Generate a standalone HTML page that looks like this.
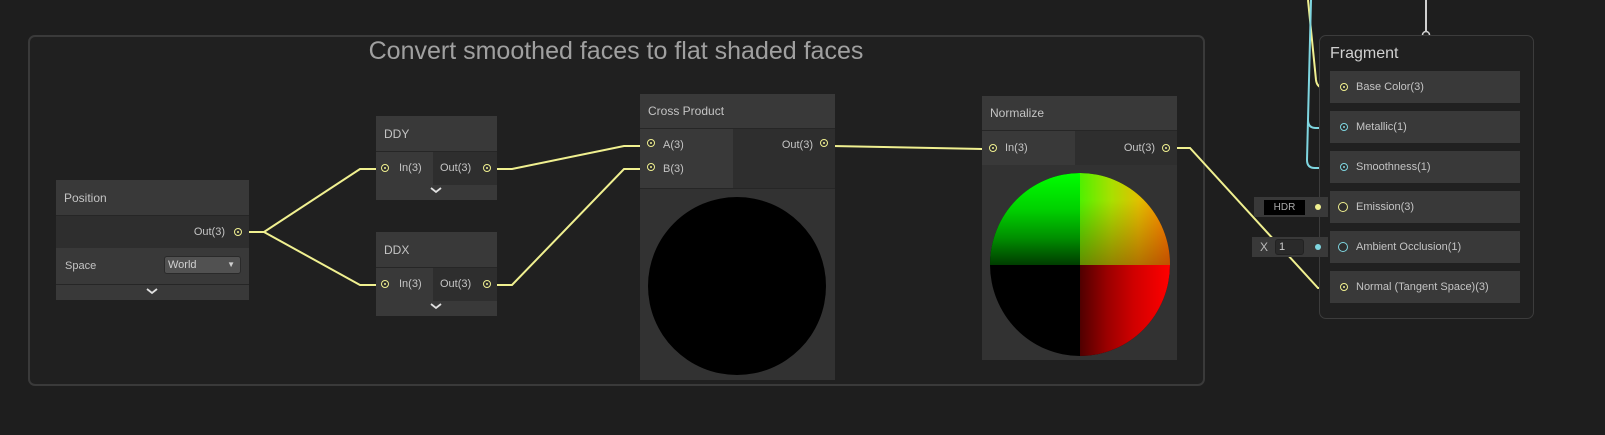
<!DOCTYPE html>
<html><head><meta charset="utf-8"><style>
*{margin:0;padding:0;box-sizing:border-box}
body{width:1605px;height:435px;background:#1e1e1e;position:relative;overflow:hidden;font-family:"Liberation Sans",sans-serif;color:#c4c4c4;font-size:11px}
.a{position:absolute}
.grp{left:28px;top:35px;width:1177px;height:351px;border:2px solid #3a3a3a;border-radius:7px;background:#202020}
.gt{left:0;width:1232px;top:37px;text-align:center;font-size:25px;color:#a0a0a0}
.hd{background:#393939;color:#c4c4c4;font-size:12px;padding-left:8px;border-bottom:1px solid #262626}
.in{background:#393939}
.out{background:#2e2e2e}
.sl{position:absolute;width:8px;height:8px;border-radius:50%;border:1.5px solid #f0f090;background:#2e2e2e}
.sl::after{content:"";position:absolute;left:1.5px;top:1.5px;width:2px;height:2px;border-radius:50%;background:#f0f090}
.sl.c{border-color:#7fd6e0}.sl.c::after{background:#7fd6e0}
.chev{background:#393939;text-align:center}
.fr{left:1319px;top:35px;width:215px;height:284px;border:1px solid #3c3c3c;border-radius:7px;background:#202020}
.slot{left:1330px;width:190px;height:32px;background:#393939;padding-left:26px;line-height:32px;font-size:11px}
</style></head><body>
<div class="a grp"></div>
<div class="a gt">Convert smoothed faces to flat shaded faces</div>

<svg class="a" style="left:0;top:0" width="1605" height="435">
<g fill="none" stroke="#f0f090" stroke-width="2">
<path d="M246 232 H264 L360 169 H378"/>
<path d="M264 232 L360 285 H378"/>
<path d="M496 169 H512 L624 146 H642"/>
<path d="M496 285 H512 L624 169 H642"/>
<path d="M832 146 L983 149"/>
<path d="M1175 148 H1190 L1318 288 H1335"/>
<path d="M1308 0 L1316 80 Q1317 88 1325 88 H1335"/>
<path d="M1328 208 H1335"/>
</g>
<g fill="none" stroke="#7fd6e0" stroke-width="2">
<path d="M1311 0 L1307 160 Q1307 168 1315 168 H1335"/>
<path d="M1308 120 Q1308 128 1316 128 H1335"/>
<path d="M1328 248 H1335"/>
</g>
<path d="M1426 0 V33" stroke="#cfcfcf" stroke-width="2"/>
<circle cx="1426" cy="35" r="3.5" fill="#202020" stroke="#cfcfcf" stroke-width="1.5"/>
</svg>

<!-- Position -->
<div class="a" style="left:56px;top:180px;width:193px;height:120px;background:#2e2e2e">
 <div class="hd" style="height:36px;line-height:36px">Position</div>
 <div class="out" style="height:32px;line-height:32px;text-align:right;padding-right:24px;position:relative">Out(3)<span class="sl" style="right:7px;top:12px"></span></div>
 <div class="in" style="height:36px;line-height:36px;padding-left:9px;position:relative">Space<div class="a" style="left:108px;top:8px;width:77px;height:18px;background:#515151;border:1px solid #2a2a2a;border-radius:3px;line-height:16px;padding-left:3px;color:#d0d0d0">World<span class="a" style="right:5px;top:0;font-size:8px">▼</span></div></div>
 <div class="chev" style="height:16px;border-top:1px solid #262626"></div>
</div>

<!-- DDY -->
<div class="a" style="left:376px;top:116px;width:121px;height:84px;background:#2e2e2e">
 <div class="hd" style="height:36px;line-height:36px">DDY</div>
 <div style="height:33px;display:flex;line-height:33px"><div class="in" style="width:57px;padding-left:23px;position:relative"><span class="sl" style="left:5px;top:12px"></span>In(3)</div><div class="out" style="width:64px;padding-left:7px;position:relative">Out(3)<span class="sl" style="right:6px;top:12px"></span></div></div>
 <div class="chev" style="height:15px"></div>
</div>
<!-- DDX -->
<div class="a" style="left:376px;top:232px;width:121px;height:84px;background:#2e2e2e">
 <div class="hd" style="height:36px;line-height:36px">DDX</div>
 <div style="height:33px;display:flex;line-height:33px"><div class="in" style="width:57px;padding-left:23px;position:relative"><span class="sl" style="left:5px;top:12px"></span>In(3)</div><div class="out" style="width:64px;padding-left:7px;position:relative">Out(3)<span class="sl" style="right:6px;top:12px"></span></div></div>
 <div class="chev" style="height:15px"></div>
</div>

<!-- Cross Product -->
<div class="a" style="left:640px;top:94px;width:195px;height:286px;background:#2e2e2e">
 <div class="hd" style="height:35px;line-height:35px">Cross Product</div>
 <div style="height:59px;display:flex"><div class="in" style="width:93px;position:relative"><span class="sl" style="left:7px;top:10px"></span><span class="a" style="left:23px;top:10px">A(3)</span><span class="sl" style="left:7px;top:34px"></span><span class="a" style="left:23px;top:34px">B(3)</span></div><div class="out" style="width:102px;position:relative"><span class="a" style="right:22px;top:10px">Out(3)</span><span class="sl" style="right:7px;top:10px"></span></div></div>
 <div style="height:192px;background:#323232;border-top:1px solid #262626;position:relative"><div class="a" style="left:8px;top:8px;width:178px;height:178px;border-radius:50%;background:#000"></div></div>
</div>

<!-- Normalize -->
<div class="a" style="left:982px;top:96px;width:195px;height:264px;background:#2e2e2e">
 <div class="hd" style="height:35px;line-height:35px">Normalize</div>
 <div style="height:34px;display:flex;line-height:34px"><div class="in" style="width:93px;padding-left:23px;position:relative"><span class="sl" style="left:7px;top:13px"></span>In(3)</div><div class="out" style="width:102px;text-align:right;padding-right:22px;position:relative">Out(3)<span class="sl" style="right:7px;top:13px"></span></div></div>
 <div style="height:195px;background:#323232;position:relative">
  <div class="a" style="left:8px;top:8px;width:180px;height:183px;border-radius:50%;overflow:hidden;background:#000">
   <div class="a" style="left:0;top:0;width:90px;height:92px;background:linear-gradient(#00ff00,#00d000 40%,#009000 70%,#005800 90%,#003c00)"></div>
   <div class="a" style="left:90px;top:0;width:90px;height:92px;background:linear-gradient(to bottom,rgba(0,0,0,0) 30%,rgba(120,20,0,.45)),linear-gradient(to right,#50f000,#a8e000 35%,#e0c000 65%,#ff8000)"></div>
   <div class="a" style="left:90px;top:92px;width:90px;height:91px;background:linear-gradient(to right,#500000,#9a0000 30%,#d00000 60%,#ff0000)"></div>
  </div>
 </div>
</div>

<!-- Fragment -->
<div class="a fr"></div>
<div class="a" style="left:1330px;top:45px;font-size:16px;color:#d0d0d0">Fragment</div>
<div class="a slot" style="top:71px">Base Color(3)<span class="sl" style="left:10px;top:12px"></span></div>
<div class="a slot" style="top:111px">Metallic(1)<span class="sl c" style="left:10px;top:12px"></span></div>
<div class="a slot" style="top:151px">Smoothness(1)<span class="sl c" style="left:10px;top:12px"></span></div>
<div class="a slot" style="top:191px">Emission(3)<span class="a" style="left:8px;top:11px;width:10px;height:10px;border-radius:50%;border:1.5px solid #f0f090;background:#2e2e2e"></span></div>
<div class="a slot" style="top:231px">Ambient Occlusion(1)<span class="a" style="left:8px;top:11px;width:10px;height:10px;border-radius:50%;border:1.5px solid #7fd6e0;background:#2e2e2e"></span></div>
<div class="a slot" style="top:271px">Normal (Tangent Space)(3)<span class="sl" style="left:10px;top:12px"></span></div>
<div class="a" style="left:1254px;top:197px;width:74px;height:20px;background:#393939"><div class="a" style="left:10px;top:3px;width:41px;height:15px;background:#000;color:#aaa;font-size:10px;text-align:center;line-height:15px">HDR</div><span class="a" style="left:61px;top:7px;width:6px;height:6px;border-radius:50%;background:#f0f090"></span></div>
<div class="a" style="left:1252px;top:237px;width:76px;height:20px;background:#393939"><span class="a" style="left:8px;top:3px;color:#bbb;font-size:12px">X</span><div class="a" style="left:23px;top:2px;width:29px;height:16px;background:#2a2a2a;border:1px solid #222;border-radius:3px;padding-left:3px;line-height:14px;color:#ccc">1</div><span class="a" style="left:63px;top:7px;width:6px;height:6px;border-radius:50%;background:#7fd6e0"></span></div>

<svg class="a" style="left:0;top:0;z-index:5" width="1605" height="435">
<path d="M147 289 l5 4 5 -4 M431 188 l5 4 5 -4 M431 304 l5 4 5 -4" stroke="#e0e0e0" stroke-width="1.8" fill="none"/>
</svg>
</body></html>
